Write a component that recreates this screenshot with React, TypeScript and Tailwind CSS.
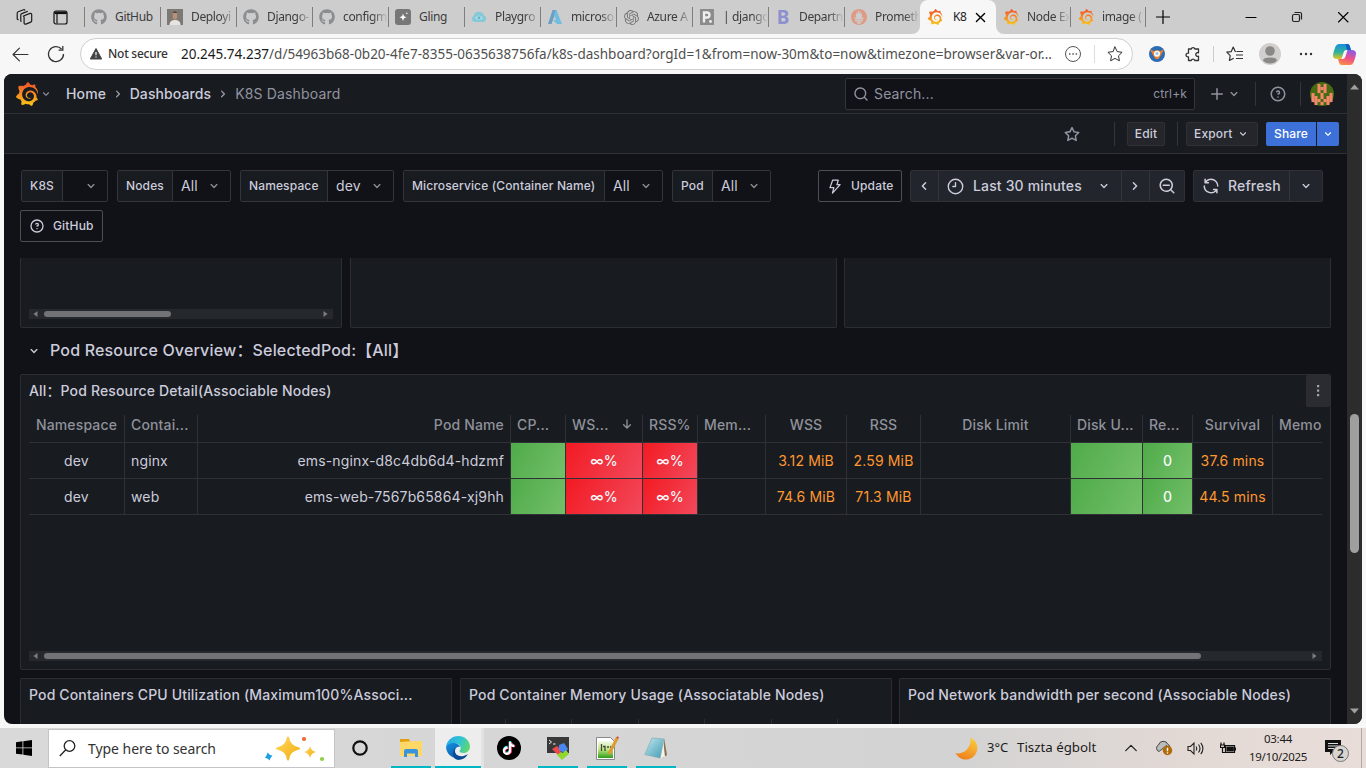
import type { ReactNode } from "react";
import { FaGithub, FaTiktok } from "react-icons/fa";
import { SiGrafana, SiPrometheus, SiOpenai } from "react-icons/si";

const P = {
  down: "M17,9.17a1,1,0,0,0-1.41,0L12,12.71,8.46,9.17a1,1,0,0,0-1.41,0,1,1,0,0,0,0,1.42l4.24,4.24a1,1,0,0,0,1.42,0L17,10.59A1,1,0,0,0,17,9.17Z",
  help: "M11.29,15.29a1.58,1.58,0,0,0-.12.15.76.76,0,0,0-.09.18.64.64,0,0,0-.06.18,1.36,1.36,0,0,0,0,.2.84.84,0,0,0,.08.38.9.9,0,0,0,.54.54.94.94,0,0,0,.76,0,.9.9,0,0,0,.54-.54A1,1,0,0,0,13,16a1,1,0,0,0-.29-.71A1,1,0,0,0,11.29,15.29ZM12,2A10,10,0,1,0,22,12,10,10,0,0,0,12,2Zm0,18a8,8,0,1,1,8-8A8,8,0,0,1,12,20ZM12,7A3,3,0,0,0,9.4,8.5a1,1,0,1,0,1.73,1A1,1,0,0,1,12,9a1,1,0,0,1,0,2,1,1,0,1,0,0,2,3,3,0,0,0,0-6Z",
  search: "M21.71,20.29,18,16.61A9,9,0,1,0,16.61,18l3.68,3.68a1,1,0,0,0,1.42,0A1,1,0,0,0,21.71,20.29ZM11,18a7,7,0,1,1,7-7A7,7,0,0,1,11,18Z",
  plus: "M19,11H13V5a1,1,0,0,0-2,0v6H5a1,1,0,0,0,0,2h6v6a1,1,0,0,0,2,0V13h6a1,1,0,0,0,0-2Z",
  star: "M22,9.67A1,1,0,0,0,21.14,9l-5.69-.83L12.9,3a1,1,0,0,0-1.8,0L8.55,8.16,2.86,9a1,1,0,0,0-.81.68,1,1,0,0,0,.25,1l4.13,4-1,5.68A1,1,0,0,0,6.9,21.44L12,18.77l5.1,2.67a.93.93,0,0,0,.46.12,1,1,0,0,0,.59-.19,1,1,0,0,0,.4-1l-1-5.68,4.13-4A1,1,0,0,0,22,9.67Zm-6.15,4a1,1,0,0,0-.29.88l.72,4.2-3.76-2a1.06,1.06,0,0,0-.94,0l-3.76,2,.72-4.2a1,1,0,0,0-.29-.88l-3-3,4.21-.61a1,1,0,0,0,.76-.55L12,5.7l1.88,3.82a1,1,0,0,0,.76.55l4.21.61Z",
  sync: "M19.91,15.51H15.38a1,1,0,0,0,0,2h2.4A8,8,0,0,1,4,12a1,1,0,0,0-2,0,10,10,0,0,0,16.88,7.23V21a1,1,0,0,0,2,0V16.5A1,1,0,0,0,19.91,15.51ZM12,2A10,10,0,0,0,5.12,4.77V3a1,1,0,0,0-2,0V7.5a1,1,0,0,0,1,1h4.5a1,1,0,0,0,0-2H6.22A8,8,0,0,1,20,12a1,1,0,0,0,2,0A10,10,0,0,0,12,2Z",
  minus: "M7,10h8a1,1,0,0,1,0,2H7a1,1,0,0,1,0-2Z",
};

function Uil({ d, s = 16, className = "" }: { d: string; s?: number; className?: string }) {
  return (
    <svg viewBox="0 0 24 24" width={s} height={s} fill="currentColor" className={`shrink-0 ${className}`}>
      <path d={d} />
    </svg>
  );
}

function Line({ d, s = 16, w = 1.2, className = "" }: { d: string; s?: number; w?: number; className?: string }) {
  return (
    <svg viewBox="0 0 16 16" width={s} height={s} fill="none" stroke="currentColor" strokeWidth={w} strokeLinecap="round" strokeLinejoin="round" className={`shrink-0 ${className}`}>
      <path d={d} />
    </svg>
  );
}

const Grafana = ({ s, className = "" }: { s: number; className?: string }) => (
  <SiGrafana size={s} style={{ fill: "url(#grafana)" }} className={`shrink-0 ${className}`} />
);

function Tab({ icon, label, width = "w-[76px]", sep = "left" }: { icon: ReactNode; label: string; width?: string; sep?: string }) {
  return (
    <div className={`flex h-5 shrink-0 items-center ${width} ${sep === "left" ? "border-l border-[#7e7e7e]" : "border-r border-[#7e7e7e] pl-px"}`}>
      <div className="ml-1.5 flex w-4 shrink-0 justify-center">{icon}</div>
      <div className={`ml-2 min-w-0 flex-1 whitespace-nowrap text-[12px] leading-5 tracking-[-0.35px] text-[#3c3c3c] ${label.length > 6 ? "[mask-image:linear-gradient(to_right,black_65%,transparent_100%)]" : ""}`}>
        {label}
      </div>
    </div>
  );
}

function TabStrip() {
  const gh = <FaGithub size={16} className="text-[#8b8d90]" />;
  return (
    <div className="flex h-[34px] items-center bg-[#cdcdcd]">
      <div className="flex w-[84px] shrink-0 items-center pl-4">
        <svg width="17" height="17" viewBox="0 0 17 17" fill="none" stroke="#1b1b1b" strokeWidth="1.2" strokeLinejoin="round">
          <path d="M7.5 7 14 4.4a1.2 1.2 0 0 1 1.7 1.1v6.2a1.5 1.5 0 0 1-1 1.4l-4.8 2a1.3 1.3 0 0 1-1.8-1.2V8a1.5 1.5 0 0 1-.6-1ZM5.5 12.6l-.7-.4V6a1.5 1.5 0 0 1 1-1.4l6-2.4M2.5 11 1.2 10V4.2a1.5 1.5 0 0 1 1-1.4L7.5.8a1.2 1.2 0 0 1 1.5.6" />
        </svg>
        <svg width="15" height="15" viewBox="0 0 15 15" className="ml-5" fill="none" stroke="#111" strokeWidth="1.2">
          <rect x="1" y="1" width="13" height="13" rx="2" />
          <path d="M1.5 2.8h12" strokeWidth="2.6" />
          <path d="M4 4v9.500" />
        </svg>
      </div>
      <Tab icon={gh} label="GitHub" />
      <Tab
        icon={
          <svg width="16" height="16" viewBox="0 0 16 16">
            <path fill="#7c7974" d="M0 0h16v16H0z" />
            <path fill="#e7e4e0" d="M2.5 16q0-5 5.5-5t5.5 5Z" />
            <path fill="#b98f78" d="M5.8 3.5h4.4v5.3Q8 12.5 5.8 8.8Z" />
            <path fill="#54423a" d="M5.5 4Q8 .5 10.500 4Z" />
          </svg>
        }
        label="Deployi"
      />
      <Tab icon={gh} label="Django-" />
      <Tab icon={gh} label="configm" />
      <Tab
        icon={
          <svg width="16" height="16" viewBox="0 0 16 16">
            <rect width="16" height="16" rx="3" fill="#777" />
            <path fill="#fff" d="M8 4.500 9 7.200 11.600 8.200 9 9.200 8 12 7 9.200 4.400 8.200 7 7.200Z" />
            <circle cx="11.800" cy="4.300" r=".8" fill="#fff" />
          </svg>
        }
        label="Gling"
      />
      <Tab
        icon={
          <svg width="16" height="16" viewBox="0 0 16 16">
            <path fill="#85c8d8" d="M3.500 13A3.200 3.200 0 0 1 2.500 7 5.500 5.500 0 0 1 13 6.500 3.400 3.400 0 0 1 12.500 13Z" />
            <path d="M4 9q4-5 8 0-4 4-8 0Z" fill="#b5e0e8" />
            <circle cx="8" cy="8.800" r="1.600" fill="#68b5c8" />
          </svg>
        }
        label="Playgro"
      />
      <Tab
        icon={
          <svg width="16" height="16" viewBox="0 0 16 16">
            <path fill="#6d9fc4" d="M5.500 1h4L4.500 15H1Z" />
            <path fill="#70bde0" d="M9.500 1 15 15h-5L6 11l3 .1-2-5L8.600 1Z" />
          </svg>
        }
        label="microso"
      />
      <Tab icon={<SiOpenai size={15} className="text-[#777]" />} label="Azure A" />
      <Tab
        icon={
          <svg width="16" height="16" viewBox="0 0 16 16">
            <path fill="#8c8c8c" d="M1 0h14v16H1z" />
            <path fill="none" stroke="#eee" strokeWidth="2.400" d="M5 13.500V3.500h3a2.500 2.500 0 0 1 0 5H5" />
            <circle cx="11.500" cy="12.500" r="1.400" fill="#eee" />
          </svg>
        }
        label="| django"
      />
      <Tab icon={<span className="text-[19px] font-bold leading-5 text-[#8d90cf]">B</span>} label="Departn" />
      <Tab icon={<SiPrometheus size={16} className="text-[#df9a86]" />} label="Prometh" />
      <div className="relative flex h-[34px] w-[76px] shrink-0 items-center self-end rounded-t-lg bg-[#f7f7f7] pl-[7px]">
        <svg width="8" height="8" viewBox="0 0 8 8" className="absolute -left-2 bottom-0"><path fill="#f7f7f7" d="M8 0v8H0a8 8 0 0 0 8-8Z" /></svg>
        <svg width="8" height="8" viewBox="0 0 8 8" className="absolute -right-2 bottom-0"><path fill="#f7f7f7" d="M0 0v8h8a8 8 0 0 1-8-8Z" /></svg>
        <Grafana s={16} />
        <div className="ml-[10px] w-[15px] whitespace-nowrap text-[12px] leading-5 tracking-[-0.35px] text-[#222]">K8</div>
        <Line d="M3 3l10 10M13 3L3 13" s={13} w={1.700} className="ml-[6px]" />
      </div>
      <Tab icon={<Grafana s={16} />} label="Node Ex" width="w-[75px]" sep="right" />
      <Tab icon={<Grafana s={16} />} label="image (" width="w-[75px]" sep="right" />
      <Line d="M8 1.500v13M1.500 8h13" s={16} className="ml-[9px]" />
      <Line d="M3 8.500h10" s={16} className="ml-[72px]" w={1.100} />
      <svg width="16" height="16" viewBox="0 0 16 16" fill="none" stroke="#222" strokeWidth="1.200" className="ml-[30px]">
        <rect x="3.500" y="5.500" width="7" height="7" rx="1.500" />
        <path d="M5.500 3.500H11a1.500 1.500 0 0 1 1.500 1.500v5.500" />
      </svg>
      <Line d="M3.500 3.500l9.500 9.500M13 3.500l-9.500 9.500" s={16} className="ml-[30px]" w={1.100} />
    </div>
  );
}

function AddressBar() {
  return (
    <div className="flex h-10 items-center bg-[#f7f7f7] text-[#333]">
      <Line d="M15 8H1.500M7 2 1 8l6 6" s={17} w={1.100} className="ml-3" />
      <svg width="18" height="18" viewBox="0 0 18 18" fill="none" stroke="#333" strokeWidth="1.300" className="ml-[18px]">
        <path d="M16.500 9A7.500 7.500 0 1 1 14.500 4M15.800 1v4.200h-4.200" />
      </svg>
      <div className="ml-[15px] flex h-8 w-[1053px] items-center rounded-full border border-[#cfcfcf] bg-white">
        <svg width="12" height="12" viewBox="0 0 12 12" className="ml-[9px]">
          <path d="M6 .5 11.700 11H.3Z" fill="#444" stroke="#444" strokeLinejoin="round" />
          <path d="M6 4v3.200M6 8.600v1" stroke="#fff" strokeWidth="1.200" />
        </svg>
        <span className="ml-[6px] w-[73px] whitespace-nowrap text-[12px] font-medium tracking-[-0.25px]">Not secure</span>
        <span className="w-[886px] whitespace-nowrap text-[13.5px] text-[#505050]">
          <span className="text-[#1b1b1b]">20.245.74.237</span>/d/54963b68-0b20-4fe7-8355-0635638756fa/k8s-dashboard?orgId=1&from=now-30m&to=now&timezone=browser&var-or...
        </span>
        <svg width="18" height="18" viewBox="0 0 18 18" fill="none" stroke="#555" className="-ml-[3px]">
          <circle cx="9" cy="9" r="7.500" />
          <path d="M5 9h1.500M8.300 9h1.500M11.600 9h1.500" strokeWidth="1.500" />
        </svg>
        <div className="ml-3 h-[18px] w-px bg-[#ddd]" />
        <Line d="M8 1l2.200 4.600 4.900.7-3.600 3.500.9 5L8 12.400 3.600 14.800l.9-5L.9 6.300l4.900-.7Z" s={16} w={1} className="ml-3" />
      </div>
      <svg width="16" height="16" viewBox="0 0 16 16" className="ml-4">
        <circle cx="8" cy="8" r="8" fill="#2c6cb4" />
        <path d="M1 3.500 5 5l3-1 3 1 4-1.500L12 9 9.500 13h-3L4 9Z" fill="#f08030" />
        <circle cx="8" cy="7.800" r="3" fill="#fff" />
        <circle cx="8" cy="7.500" r="1.600" fill="#9dc4e6" />
      </svg>
      <svg width="16" height="16" viewBox="0 0 16 16" fill="none" stroke="#333" strokeWidth="1.300" className="ml-5">
        <path d="M3.500 3h2.700a1.900 1.900 0 0 1 3.700 0h3.600v3.800a1.900 1.900 0 1 0 0 3.400v4.300H9.800a1.900 1.900 0 0 0-3.600 0H3.500v-3.700a1.900 1.900 0 1 1 0-3.600Z" strokeLinejoin="round" />
      </svg>
      <div className="ml-3 h-4 w-px bg-[#ccc]" />
      <svg width="17" height="16" viewBox="0 0 17 16" fill="none" stroke="#333" strokeWidth="1.200" className="ml-3" strokeLinejoin="round">
        <path d="M9.500 6 7.200 1 5.300 5.600.8 6.200l3.400 3.400-.8 4.900 4.300-2.300M10.500 5.500H17M10 9h7M10 12.500h7" />
      </svg>
      <svg width="22" height="22" viewBox="0 0 22 22" className="ml-4">
        <circle cx="11" cy="11" r="11" fill="#d2d0ce" />
        <circle cx="11" cy="8" r="4.800" fill="#8a8886" />
        <path d="M4 17.500q0-3 7-3t7 3q-2.500 3-7 3t-7-3Z" fill="#8a8886" />
      </svg>
      <svg width="14" height="4" viewBox="0 0 14 4" className="ml-[18px]" fill="#333"><circle cx="2" cy="2" r="1.200" /><circle cx="7" cy="2" r="1.200" /><circle cx="12" cy="2" r="1.200" /></svg>
      <svg width="23" height="21" viewBox="0 0 23 21" className="ml-5">
        <defs>
          <linearGradient id="cpA" x1="0" y1="0" x2="0" y2="1"><stop stopColor="#1a8fe0" /><stop offset=".55" stopColor="#2fb39a" /><stop offset="1" stopColor="#e8c520" /></linearGradient>
          <linearGradient id="cpB" x1="0.600" y1="0" x2="0.300" y2="1"><stop stopColor="#8a5ce8" /><stop offset=".5" stopColor="#ee4f8b" /><stop offset="1" stopColor="#fb9040" /></linearGradient>
        </defs>
        <path fill="url(#cpA)" d="M6 0h8.500a2.500 2.500 0 0 1 2.200 1.800L18 6h-4.500a3 3 0 0 0-2.800 2L8.500 15H4.200Q0 15 0 11.500 0 9 2.500 2.500 3.500 0 6 0Z" />
        <path fill="url(#cpB)" d="M17 21H8.500a2.500 2.500 0 0 1-2.200-1.800L5 15h4.500a3 3 0 0 0 2.800-2L14.500 6h4.300Q23 6 23 9.500q0 2.500-2.500 9-1 2.500-3.500 2.500Z" />
        <path fill="#0d5fc2" d="M12.500 0h2a2.500 2.500 0 0 1 2.200 1.800L18 6h-4Z" />
      </svg>
    </div>
  );
}

function GrafanaHeader() {
  const face = ["0010100", "0011100", "0010100", "1001001", "1101011", "1110111", "0101010"];
  return (
    <>
      <div className="flex h-10 shrink-0 items-center border-b border-[#2e3035] bg-[#181b1f] text-[14px] font-medium tracking-[0.15px] text-[#ccccdc]">
        <Grafana s={24} className="ml-[11px]" />
        <Uil d={P.down} s={14} className="text-[#8e8e99]" />
        <span className="ml-[13px]">Home</span>
        <Uil d={P.down} s={16} className="ml-1 -rotate-90 text-[#9a9aa6]" />
        <span className="ml-[3.5px] tracking-[0.1px]">Dashboards</span>
        <Uil d={P.down} s={16} className="ml-1 -rotate-90 text-[#9a9aa6]" />
        <span className="ml-1 font-normal text-[#9293a0]">K8S Dashboard</span>
        <div className="ml-auto flex h-8 w-[350px] items-center rounded-[2px] border border-[#34353a] bg-[#111217] font-normal text-[#9293a0]">
          <Uil d={P.search} s={16} className="ml-[7px]" />
          <span className="ml-[5px] flex-1">Search...</span>
          <span className="mr-[7px] text-[12px]">ctrl+k</span>
        </div>
        <Uil d={P.plus} s={18} className="ml-[13px] text-[#9293a0]" />
        <Uil d={P.down} s={16} className="text-[#9293a0]" />
        <div className="ml-[13px] h-6 w-px bg-[#34353a]" />
        <Uil d={P.help} s={18} className="ml-[13px] text-[#9293a0]" />
        <div className="ml-[13px] h-6 w-px bg-[#34353a]" />
        <svg width="24" height="24" viewBox="0 0 24 24" className="ml-[9px] mr-[13px] shrink-0">
          <circle cx="12" cy="12" r="12" fill="#476b12" />
          {face.map((r, y) => r.split("").map((c, x) => (c === "1" ? <rect key={`${y}-${x}`} x={1.5 + x * 3} y={2 + y * 3} width="3.05" height="3.05" fill="#f4876c" /> : null)))}
        </svg>
      </div>
      <div className="flex h-10 shrink-0 items-center justify-end border-b border-[#2e3035] bg-[#181b1f] pr-2 text-[12px] font-medium tracking-[0.15px] text-[#ccccdc]">
        <Uil d={P.star} s={18} className="text-[#9293a0]" />
        <div className="ml-[33px] h-6 w-px bg-[#34353a]" />
        <div className="ml-3 flex h-6 w-[38px] items-center justify-center rounded-[2px] border border-[#303137] bg-[#25262b]">Edit</div>
        <div className="ml-3 h-6 w-px bg-[#34353a]" />
        <div className="ml-2 flex h-6 w-[72px] items-center rounded-[2px] border border-[#303137] bg-[#25262b] pl-[7px]">
          Export
          <Uil d={P.down} s={14} className="ml-[4px]" />
        </div>
        <div className="ml-2 flex h-6 w-[50px] items-center justify-center rounded-l-[2px] bg-[#3d71d9] text-white">Share</div>
        <div className="ml-px flex h-6 w-[22px] items-center justify-center rounded-r-[2px] bg-[#3d71d9] text-white"><Uil d={P.down} s={14} /></div>
      </div>
    </>
  );
}

function Variable({ label, value, lw, vw }: { label: string; value: string; lw: string; vw: string }) {
  return (
    <div className="flex h-8 shrink-0 rounded-[2px] border border-[#34353a]">
      <div className={`flex items-center whitespace-nowrap border-r border-[#34353a] bg-[#181b1f] pl-2 text-[12px] font-medium tracking-[0.13px] ${lw}`}>{label}</div>
      <div className={`flex items-center justify-between pl-2 pr-[8px] text-[14px] tracking-[0.15px] ${vw}`}>
        <span className="pb-px">{value}</span>
        <Uil d={P.down} s={16} className="text-[#8e8e99]" />
      </div>
    </div>
  );
}

function Controls() {
  const seg = "flex h-full items-center border-r border-[#34353a]";
  return (
    <div className="h-[104px] shrink-0 pl-4 pt-4">
      <div className="flex items-center pl-px">
        <Variable label="K8S" value="" lw="w-[41px]" vw="w-[44px]" />
        <div className="w-[9px]" />
        <Variable label="Nodes" value="All" lw="w-[55px]" vw="w-[57px]" />
        <div className="w-[9px]" />
        <Variable label="Namespace" value="dev" lw="w-[87px]" vw="w-[65px]" />
        <div className="w-[9px]" />
        <Variable label="Microservice (Container Name)" value="All" lw="w-[201px]" vw="w-[57px]" />
        <div className="w-[9px]" />
        <Variable label="Pod" value="All" lw="w-[40px]" vw="w-[57px]" />
        <div className="ml-[47px] flex h-8 w-[84px] shrink-0 items-center rounded-[2px] border border-[#4c4d55] pl-2 text-[12px] font-medium tracking-[0.15px]">
          <Line d="M6 1.300h6L10.600 6H14L5.800 15 7.300 9.200H3.200Z" s={15} w={1.300} />
          <span className="ml-[9px]">Update</span>
        </div>
        <div className="ml-2 flex h-8 w-[275px] shrink-0 items-center rounded-[2px] border border-[#303137] bg-[#22252b] text-[14px] font-medium tracking-[0.15px]">
          <div className={`${seg} w-7 justify-center pr-px`}><Uil d={P.down} s={18} className="rotate-90" /></div>
          <div className={`${seg} w-[183px] pl-2`}>
            <Line d="M8 1.200a6.800 6.800 0 1 0 0 13.600A6.800 6.800 0 0 0 8 1.200ZM8 4.500V8H5.500" s={17} w={1.300} />
            <span className="ml-[9px] flex-1 pb-px">Last 30 minutes</span>
            <Uil d={P.down} s={16} className="mr-[9px]" />
          </div>
          <div className={`${seg} w-7 justify-center pr-0.5`}><Uil d={P.down} s={18} className="-rotate-90" /></div>
          <div className="flex flex-1 justify-center"><Uil d={P.search + P.minus} s={18} /></div>
        </div>
        <div className="ml-2 flex h-8 w-[130px] shrink-0 items-center rounded-[2px] border border-[#303137] bg-[#22252b] text-[14px] font-medium tracking-[0.15px]">
          <div className={`${seg} w-24 pl-2`}>
            <Uil d={P.sync} s={18} />
            <span className="ml-2 pb-px">Refresh</span>
          </div>
          <div className="flex flex-1 justify-center"><Uil d={P.down} s={16} /></div>
        </div>
      </div>
      <div className="mt-2 flex h-8 w-[83px] items-center rounded-[2px] border border-[#4c4d55] pl-2 text-[12px] font-medium tracking-[0.15px]">
        <Uil d={P.help} s={16} />
        <span className="ml-2">GitHub</span>
      </div>
    </div>
  );
}

function HScroll({ thumb }: { thumb: string }) {
  return (
    <div className="mx-2 flex h-[10px] items-center justify-between bg-[#25282c] pl-1 pr-[5px]">
      <div className="flex items-center">
        <svg width="5" height="6" viewBox="0 0 5 6" className="mr-[6px]"><path d="M4.500 0v6L.5 3Z" fill="#7c7d80" /></svg>
        <div className={`h-[6px] rounded-full bg-[#727376] ${thumb}`} />
      </div>
      <svg width="5" height="6" viewBox="0 0 5 6"><path d="M.5 0v6l4-3Z" fill="#7c7d80" /></svg>
    </div>
  );
}

const COLS = [
  { w: "w-[96px]", a: "justify-center", h: "Namespace" },
  { w: "w-[73px]", a: "justify-start", h: "Contai..." },
  { w: "w-[313px]", a: "justify-end", h: "Pod Name" },
  { w: "w-[55px]", a: "justify-start", h: "CP..." },
  { w: "w-[77px]", a: "justify-center", h: "WS..." },
  { w: "w-[55px]", a: "justify-start", h: "RSS%" },
  { w: "w-[68px]", a: "justify-start", h: "Mem..." },
  { w: "w-[81px]", a: "justify-center", h: "WSS" },
  { w: "w-[74px]", a: "justify-center", h: "RSS" },
  { w: "w-[150px]", a: "justify-center", h: "Disk Limit" },
  { w: "w-[72px]", a: "justify-start", h: "Disk U..." },
  { w: "w-[50px]", a: "justify-center", h: "Re..." },
  { w: "w-[80px]", a: "justify-center", h: "Survival" },
  { w: "w-[49px]", a: "justify-start", h: "Memo" },
];
const ROWS = [
  ["dev", "nginx", "ems-nginx-d8c4db6d4-hdzmf", "", "∞%", "∞%", "", "3.12 MiB", "2.59 MiB", "", "", "0", "37.6 mins", ""],
  ["dev", "web", "ems-web-7567b65864-xj9hh", "", "∞%", "∞%", "", "74.6 MiB", "71.3 MiB", "", "", "0", "44.5 mins", ""],
];

function cellTone(i: number) {
  if (i === 3 || i === 10 || i === 11) return "bg-[linear-gradient(120deg,#4fab49,#73bf69)] text-[#f7f8fa] font-medium";
  if (i === 4 || i === 5) return "bg-[linear-gradient(120deg,#f21a22,#f2495c)] text-[#f7f8fa] font-medium";
  if (i === 7 || i === 8 || i === 12) return "text-[#ff9830]";
  return "";
}
const cellAlign = (i: number) => (i === 5 ? "justify-center" : COLS[i].a);
const headAlign = (i: number) => (i === 4 ? "justify-between" : i === 11 ? "justify-start" : COLS[i].a);

function Table() {
  return (
    <div className="mx-2 mt-2 text-[14px] tracking-[0.15px]">
      <div className="flex h-7 border-b border-[#2f3136] font-medium text-[#8f919b]">
        {COLS.map((c, i) => (
          <div key={c.h} className={`flex shrink-0 items-center whitespace-nowrap px-[6px] pb-[9px] ${c.w} ${i < 13 ? "border-r border-[#2f3136]" : ""} ${headAlign(i)}`}>
            {c.h}
            {i === 4 && <Line d="M8 2.500v11M3.500 9 8 13.500 12.500 9" s={12} w={1.800} className="mr-[3px]" />}
          </div>
        ))}
      </div>
      {ROWS.map((r) => (
        <div key={r[1]} className="flex h-9 border-b border-[#2f3136]">
          {r.map((v, i) => (
            <div key={i} className={`shrink-0 ${COLS[i].w} ${i < 13 ? "border-r border-[#2f3136]" : ""}`}>
              <div className={`flex h-full items-center whitespace-nowrap px-[6px] ${cellAlign(i)} ${cellTone(i)}`}>{v}</div>
            </div>
          ))}
        </div>
      ))}
    </div>
  );
}

function Dashboard() {
  const panel = "shrink-0 border border-[#2c2e33] bg-[#181b1f]";
  const title = "block pl-2 text-[14px] font-medium leading-8 tracking-[0.15px]";
  return (
    <div className="flex min-h-0 flex-1 flex-col overflow-hidden pl-4">
      <div className="flex h-[70px] shrink-0">
        <div className={`${panel} w-[322px] rounded-b-[2px] border-t-0 pt-[51px]`}><HScroll thumb="w-[127px]" /></div>
        <div className={`${panel} ml-2 w-[487px] rounded-b-[2px] border-t-0`} />
        <div className={`${panel} ml-[7px] w-[487px] rounded-b-[2px] border-t-0`} />
      </div>
      <div className="flex h-[46px] shrink-0 items-center pl-[6px] text-[16px] font-medium tracking-[0.17px]">
        <Uil d={P.down} s={16} />
        <span className="ml-2 pb-0.5">Pod Resource Overview：SelectedPod:【All】</span>
      </div>
      <div className={`${panel} h-[296px] w-[1311px] rounded-[2px]`}>
        <div className="flex h-8 justify-between">
          <span className={title}>All：Pod Resource Detail(Associable Nodes)</span>
          <div className="flex h-8 w-6 items-center justify-center rounded-[2px] bg-[#2a2c31]">
            <svg width="4" height="14" viewBox="0 0 4 14" fill="#a3a4af"><rect x="1" y="1" width="2.200" height="2.200" /><rect x="1" y="5.500" width="2.200" height="2.200" /><rect x="1" y="10" width="2.200" height="2.200" /></svg>
          </div>
        </div>
        <Table />
        <div className="h-[136px]" />
        <HScroll thumb="w-[1157px]" />
      </div>
      <div className="mt-2 flex h-[46px] shrink-0">
        <div className={`${panel} w-[432px] rounded-t-[2px] border-b-0`}><span className={title}>Pod Containers CPU Utilization (Maximum100%Associ...</span></div>
        <div className={`${panel} ml-2 w-[432px] rounded-t-[2px] border-b-0`}>
          <span className={title}>Pod Container Memory Usage (Associatable Nodes)</span>
          <div className="ml-11 mt-2 flex h-[5px] gap-[65.400px]">
            {[0, 1, 2, 3, 4, 5].map((i) => <div key={i} className="w-px bg-[#2c2e33]" />)}
          </div>
        </div>
        <div className={`${panel} ml-[7px] w-[432px] rounded-t-[2px] border-b-0`}><span className={title}>Pod Network bandwidth per second (Associable Nodes)</span></div>
      </div>
    </div>
  );
}

function Slot({ children, bar = false, active = false }: { children: ReactNode; bar?: boolean; active?: boolean }) {
  return (
    <div className={`flex h-10 w-[49px] shrink-0 flex-col items-center ${active ? "border-r-[3px] border-[#e2e2e2] bg-[#ededed]" : ""}`}>
      <div className="flex h-[38px] items-center pt-[2px]">{children}</div>
      {bar && <div className={`h-[2px] bg-[#00b7c3] ${active ? "w-full" : "w-10"}`} />}
    </div>
  );
}

function Taskbar() {
  return (
    <div className="flex h-10 items-center bg-[linear-gradient(90deg,#d9d9d9,#d3d3d3_70%,#e3d9d5_88%,#e9ddd9)] text-[#1c1c1c]">
      <svg width="16" height="16" viewBox="0 0 16 16" className="ml-4 shrink-0"><path d="M0 2.200 6.500 1.300v6.200H0ZM7.300 1.200 16 0v7.500H7.300ZM0 8.300h6.500v6.300L0 13.700ZM7.300 8.300H16V16l-8.700-1.200Z" /></svg>
      <div className="ml-4 flex h-[39px] w-[287px] shrink-0 items-center self-end border border-[#c4c4c4] bg-white">
        <svg width="17" height="17" viewBox="0 0 17 17" fill="none" stroke="#222" strokeWidth="1.300" className="ml-[10px]"><circle cx="10.500" cy="6" r="5.300" /><path d="m6.800 9.800-6 6.200" /></svg>
        <span className="ml-3 w-[176px] whitespace-nowrap text-[14px] tracking-[-0.050px] text-[#333]">Type here to search</span>
        <svg width="62" height="26" viewBox="0 0 62 26">
          <defs><linearGradient id="spk" x1="0" y1="0" x2="1" y2="1"><stop stopColor="#ffd75a" /><stop offset="1" stopColor="#f3ae13" /></linearGradient></defs>
          <path fill="url(#spk)" stroke="url(#spk)" strokeLinejoin="round" d="M24 1.500q1.500 9.500 11 11-9.500 1.500-11 11-1.500-9.500-11-11 9.500-1.500 11-11Z" strokeWidth="2" />
          <path fill="url(#spk)" d="M46 10q1 5 6 6-5 1-6 6-1-5-6-6 5-1 6-6Z" />
          <path fill="#1aa0e8" d="M3.500 16.500q1.500 2.500 5 3-2 1.700-2.800 5-1.500-2.300-4.700-2.800 2-2 2.500-5.200Z" />
          <circle cx="40" cy="3" r="2.100" fill="#f0652e" /><circle cx="58" cy="23" r="2.100" fill="#8fcf45" />
        </svg>
      </div>
      <Slot><svg width="16" height="16" viewBox="0 0 16 16"><circle cx="8" cy="8" r="6.700" fill="none" stroke="#111" strokeWidth="2.200" /></svg></Slot>
      <div className="w-[2px]" />
      <Slot bar>
        <svg width="22" height="20" viewBox="0 0 22 20"><path fill="#e0a010" d="M0 1h9l1.500 3H0Z" /><path fill="#ffd867" d="M0 4 10 3.300 22 3v15H0Z" /><path fill="#3a94dc" d="M4 19v-6a2 2 0 0 1 2-2h10a2 2 0 0 1 2 2v6h-3v-3.500H7V19Z" /></svg>
      </Slot>
      <Slot bar active>
        <svg width="24" height="24" viewBox="0 0 24 24">
          <defs>
            <linearGradient id="edA" x1="0" y1=".3" x2="1" y2=".6"><stop stopColor="#29a9e8" /><stop offset=".55" stopColor="#30c5d0" /><stop offset="1" stopColor="#62d86a" /></linearGradient>
            <linearGradient id="edB" x1="0" y1="0" x2=".7" y2="1"><stop stopColor="#1493e0" /><stop offset="1" stopColor="#0c55a8" /></linearGradient>
          </defs>
          <path fill="url(#edA)" d="M0 11A12 12 0 0 1 12 0c7 0 12 5 12 10.500 0 4-3 6.500-6.500 6.500-2.500 0-4-1-4-2 0-.8 1.200-1 1.200-3 0-2.500-2.500-4.500-5.700-4.500Q3 7.500 0 11Z" />
          <path fill="url(#edB)" d="M0 11.500C1 8 5 6.500 8.500 7c3 .4 5 2 5.500 4-2.500-1-5 1-5 4 0 4 4 6.500 8 6.300A12 12 0 0 1 0 11.500Z" />
          <path fill="#0b4a95" d="M9.500 12C7 17 11 20.500 16 20.200c2.500-.2 4.500-1.400 6-2.200A12 12 0 0 1 12 24C6 23 5.500 15 9.500 12Z" />
        </svg>
      </Slot>
      <Slot>
        <div className="relative flex h-6 w-6 items-center justify-center rounded-full bg-black">
          <FaTiktok size={13} className="absolute left-[5px] top-[5px] text-[#25f4ee]" />
          <FaTiktok size={13} className="absolute left-[6.500px] top-[6px] text-[#fe2c55]" />
          <FaTiktok size={13} className="absolute left-[5.800px] top-[5.500px] text-white" />
        </div>
      </Slot>
      <Slot bar>
        <svg width="24" height="24" viewBox="0 0 24 24"><path fill="#383838" d="M1 1h22v16H1z" /><path d="m3 4 2.500 2L3 8M7 8h2.500" stroke="#eee" fill="none" /><path fill="#ef4848" d="m6 13 5-3 4 4-1 7Z" /><path fill="#4887f0" d="m13 9 5-2 4 6-4 4-5-3Z" /><path fill="#90d830" d="m11 19 4-3 2 1 3-3 3 4-7 6Z" /></svg>
      </Slot>
      <Slot bar>
        <svg width="24" height="24" viewBox="0 0 24 24">
          <defs><linearGradient id="npp" x1="0" y1="0" x2="0" y2="1"><stop stopColor="#f3faee" /><stop offset=".5" stopColor="#bde67c" /><stop offset="1" stopColor="#2e9c1c" /></linearGradient></defs>
          <path fill="#fff" stroke="#888" d="M1.500 1.500h14l4 4v18h-18Z" /><path fill="url(#npp)" d="M3 5h15v17H3Z" /><path d="M6.500 15V8M8 10.500h2V15M12 11h2M15 11h2" fill="none" stroke="#444" strokeWidth="1.300" /><path d="M22.500 1.500 14 18" stroke="#dd9a35" strokeWidth="3" /><path d="m22 1 1.500 1" stroke="#c44" strokeWidth="2" />
        </svg>
      </Slot>
      <Slot bar>
        <svg width="24" height="24" viewBox="0 0 24 24">
          <defs><linearGradient id="ntp" x1="0" y1="0" x2="1" y2="1"><stop stopColor="#c4e7ee" /><stop offset="1" stopColor="#3e9cb4" /></linearGradient></defs>
          <path fill="#87704c" d="m20 2 3 17-4 3Z" /><path fill="#f3f3ed" d="m19 3 2 18-4 1Z" /><path fill="url(#ntp)" stroke="#79a9b4" strokeWidth=".6" d="M8 2 20 3 16 22 .8 18.500Z" />
        </svg>
      </Slot>
      <svg width="23" height="23" viewBox="0 0 23 23" className="ml-[275px] shrink-0">
        <defs><linearGradient id="moon" x1=".7" y1="0" x2=".3" y2="1"><stop stopColor="#fbcb3e" /><stop offset="1" stopColor="#ee7f1c" /></linearGradient></defs>
        <path fill="url(#moon)" d="M15.500.5a11.500 11.500 0 1 1-15 15.500C8 18 16.500 12 15.500.5Z" />
      </svg>
      <span className="ml-[9px] w-[30px] shrink-0 whitespace-nowrap text-[13px]">3°C</span>
      <span className="w-[107px] shrink-0 whitespace-nowrap text-[13.3px]">Tiszta égbolt</span>
      <Line d="m2 11 6-6 6 6" s={14} w={1.400} />
      <svg width="18" height="16" viewBox="0 0 18 16" className="ml-[17px] shrink-0">
        <path d="M4 11.500a3.500 3.500 0 0 1-.5-6.500A5 5 0 0 1 13 4.500q2 .5 2 3" fill="#bbb" stroke="#444" /><path d="M4 11.500 12 5" stroke="#555" />
        <circle cx="12.500" cy="10.500" r="4.700" fill="#b06a08" /><path d="M12.500 7.800v3.500M12.500 12.300v1.200" stroke="#fff" strokeWidth="1.400" />
      </svg>
      <svg width="17" height="15" viewBox="0 0 17 15" fill="none" stroke="#222" strokeWidth="1.100" className="ml-[14px] shrink-0"><path d="M1 5.500h2.500L7 2v11L3.500 9.500H1ZM9 5.500q1.500 2 0 4M11.500 3.500q3 4 0 8M13.800 1.800q4.200 5.700 0 11.400" /></svg>
      <svg width="16" height="13" viewBox="0 0 16 13" className="ml-4 shrink-0" fill="none" stroke="#111" strokeWidth="1.200"><path d="M5.500 3.500h9v7h-9Z" /><path d="M7 5h6.200v4H7Z" fill="#111" /><path d="M15.500 5.500v3M1 .5v2.500M4 .5v2.500M.5 3h4v2.500h-4ZM2.500 6v4.500h3" /></svg>
      <div className="ml-2 flex w-[68px] shrink-0 flex-col items-center text-[11.5px] leading-[18px] tracking-[-0.300px]">
        <span>03:44</span>
        <span>19/10/2025</span>
      </div>
      <div className="relative ml-[13px] h-6 w-6 shrink-0">
        <svg width="16" height="16" viewBox="0 0 16 16" className="mt-[3px]"><path d="M0 1h16v12H8l-3 3v-3H0Z" fill="#111" /><path d="M3 4.500h10M3 7h10M3 9.500h6" stroke="#ddd" /></svg>
        <div className="absolute left-[7px] top-[9px] flex h-[17px] w-[17px] items-center justify-center rounded-full border border-[#777] bg-[#d8d4d2] text-[12px] font-medium">2</div>
      </div>
      <div className="ml-auto mr-1 h-10 w-px bg-[#b3aaa7]" />
    </div>
  );
}

export default function App() {
  return (
    <div className="flex h-[768px] w-[1366px] flex-col overflow-hidden bg-[#f7f7f7] font-['Noto_Sans','Open_Sans',sans-serif]">
      <svg width="0" height="0" className="absolute">
        <defs><linearGradient id="grafana" x1="0" y1="0" x2="0" y2="1"><stop stopColor="#f0502d" /><stop offset="1" stopColor="#fbc716" /></linearGradient></defs>
      </svg>
      <TabStrip />
      <AddressBar />
      <div className="mx-1 mb-1 flex h-[650px] shrink-0 overflow-hidden rounded-lg bg-[#111217] font-['Inter','Noto_Sans_CJK_SC',sans-serif] text-[#ccccdc]">
        <div className="flex w-[1343px] shrink-0 flex-col">
          <GrafanaHeader />
          <Controls />
          <Dashboard />
        </div>
        <div className="flex w-[15px] shrink-0 flex-col items-center bg-[#2c2c2c] pb-[10px] pt-[10px]">
          <svg width="9" height="6" viewBox="0 0 9 6"><path d="M0 5.500 4.500.5 9 5.500Z" fill="#a0a0a0" /></svg>
          <div className="mt-[324px] h-[139px] w-[9px] rounded-full bg-[#9f9f9f]" />
          <svg width="9" height="6" viewBox="0 0 9 6" className="mt-auto"><path d="M0 .5 4.500 5.500 9 .5Z" fill="#a0a0a0" /></svg>
        </div>
      </div>
      <Taskbar />
    </div>
  );
}
